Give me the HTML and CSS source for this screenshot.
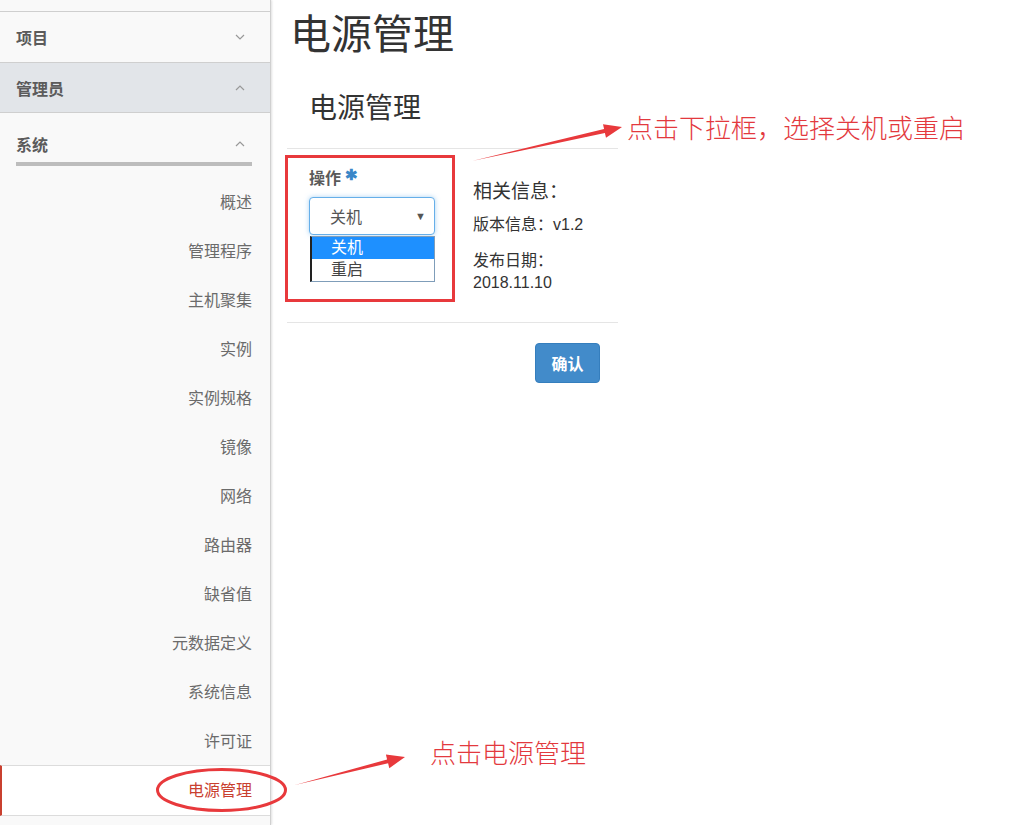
FILE: index.html
```html
<!DOCTYPE html>
<html lang="zh">
<head>
<meta charset="utf-8">
<title>电源管理</title>
<link rel="stylesheet" href="styles.css">
</head>
<body>
<div class="layout">
  <aside class="sidebar">
    <div class="top-gap"></div>
    <div class="group-head first">
      <span>项目</span>
      <svg class="chev" width="10" height="6" viewBox="0 0 10 6"><path d="M1 1 L5 5 L9 1" fill="none" stroke="#999" stroke-width="1.2"/></svg>
    </div>
    <div class="group-head open">
      <span>管理员</span>
      <svg class="chev" width="10" height="6" viewBox="0 0 10 6"><path d="M1 5 L5 1 L9 5" fill="none" stroke="#999" stroke-width="1.2"/></svg>
    </div>
    <div class="group-head system">
      <span>系统</span>
      <svg class="chev" width="10" height="6" viewBox="0 0 10 6"><path d="M1 5 L5 1 L9 5" fill="none" stroke="#999" stroke-width="1.2"/></svg>
    </div>
    <div class="system-bar"></div>
    <ul class="nav">
      <li>概述</li>
      <li>管理程序</li>
      <li>主机聚集</li>
      <li>实例</li>
      <li>实例规格</li>
      <li>镜像</li>
      <li>网络</li>
      <li>路由器</li>
      <li>缺省值</li>
      <li>元数据定义</li>
      <li>系统信息</li>
      <li>许可证</li>
      <li class="active">电源管理</li>
    </ul>
  </aside>
  <main class="content">
    <h1 class="page-title">电源管理</h1>
    <section class="panel">
      <div class="panel-head">电源管理</div>
      <div class="panel-body">
        <div class="form-col">
          <label class="field-label">操作 <span class="req">✱</span></label>
          <div class="select-wrap">
            <div class="select">
              <span>关机</span>
              <span class="caret">▼</span>
            </div>
            <ul class="dropdown">
              <li class="selected">关机</li>
              <li>重启</li>
            </ul>
          </div>
        </div>
        <div class="info-col">
          <div class="info-title">相关信息：</div>
          <p class="info-line">版本信息：v1.2</p>
          <p class="info-line">发布日期：2018.11.10</p>
        </div>
      </div>
      <div class="panel-foot">
        <button class="btn-primary">确认</button>
      </div>
    </section>
  </main>
</div>

<svg class="marks" width="1010" height="825" viewBox="0 0 1010 825">
  <rect x="286.5" y="156.5" width="167" height="144" fill="none" stroke="#e8393c" stroke-width="3"/>
  <polygon points="472,161 604.1,129.1 603,124.2 622,127 606,137.8 604.9,133" fill="#e8393c"/>
  <ellipse cx="221.5" cy="790" rx="64" ry="20.5" fill="none" stroke="#e8393c" stroke-width="3"/>
  <polygon points="295,785 387.1,759.5 385.9,754.6 405,757 389.3,768.2 388.1,763.3" fill="#e8393c"/>
</svg>
<div class="note note-top">点击下拉框，选择关机或重启</div>
<div class="note note-bottom">点击电源管理</div>
</body>
</html>
```
FILE: styles.css
```css
* { box-sizing: border-box; }
html, body {
  margin: 0;
  padding: 0;
  background: #fff;
  font-family: "Liberation Sans", "Noto Sans CJK SC", sans-serif;
  color: #333;
}
body { position: relative; width: 1010px; height: 825px; overflow: hidden; }

.layout { display: flex; height: 825px; }

.sidebar {
  width: 271px;
  flex: none;
  background: #f9f9f9;
  border-right: 1px solid #d0d0d0;
  box-shadow: 1px 0 2px rgba(0,0,0,0.12);
  display: flex;
  flex-direction: column;
}
.sidebar > * { flex: none; }
.top-gap { height: 12px; border-bottom: 1px solid #cfcfcf; }
.group-head {
  height: 50px;
  padding: 0 25px 0 16px;
  display: flex;
  align-items: center;
  justify-content: space-between;
  font-size: 16px;
  font-weight: bold;
  color: #5b5b5b;
  border-bottom: 1px solid #cfcfcf;
}
.group-head.first { height: 51px; }
.group-head.open { background: #e2e5e9; height: 50px; }
.group-head.system { border-bottom: none; height: 49px; padding-top: 12px; }
.chev { display: block; }
.system-bar {
  height: 4px;
  margin: 0 18px 0 16px;
  background: #bdbdbd;
}
.nav {
  list-style: none;
  margin: 0;
  padding: 12px 0 0 0;
}
.nav li {
  height: 49px;
  line-height: 49px;
  text-align: right;
  padding-right: 18px;
  font-size: 16px;
  color: #6b6b6b;
}
.nav li.active {
  background: #fff;
  color: #c9402f;
  border-left: 2px solid #c9402f;
  border-top: 1px solid #dcdcdc;
  border-bottom: 1px solid #dcdcdc;
  height: 51px;
  line-height: 49px;
  margin-top: -1px;
}

.content {
  flex: 1;
  padding-left: 16px;
}
.page-title {
  margin: 0;
  padding-left: 3px;
  font-size: 41px;
  font-weight: normal;
  line-height: 70px;
  color: #333;
}
.panel { width: 331px; }
.panel-head {
  height: 79px;
  line-height: 78px;
  padding-left: 22px;
  font-size: 28px;
  color: #333;
  border-bottom: 1px solid #e5e5e5;
}
.panel-body {
  display: flex;
  gap: 38px;
  padding: 20px 8px 28px 22px;
  border-bottom: 1px solid #e5e5e5;
}
.form-col { width: 126px; flex: none; }
.field-label {
  display: block;
  font-size: 16px;
  line-height: 20px;
  font-weight: bold;
  color: #5a5a5a;
  margin-bottom: 8px;
}
.req { color: #3a87c8; font-size: 15px; position: relative; top: -4px; }
.select-wrap { position: relative; }
.select {
  height: 38px;
  border: 1px solid #66afe9;
  border-radius: 4px;
  box-shadow: 0 0 5px rgba(102,175,233,0.55);
  display: flex;
  align-items: center;
  justify-content: space-between;
  padding: 0 8px 0 20px;
  font-size: 16px;
  color: #555;
  background: #fff;
}
.caret { font-size: 11px; color: #555; }
.dropdown {
  position: absolute;
  left: 1px;
  top: 39px;
  width: 125px;
  margin: 0;
  padding: 0;
  list-style: none;
  background: #fff;
  border: 1px solid #7f9db9;
  border-left: 2px solid #222;
}
.dropdown li {
  height: 22px;
  line-height: 22px;
  font-size: 16px;
  padding-left: 19px;
  color: #444;
}
.dropdown li.selected { background: #1e90ff; color: #fff; }

.info-col { padding-top: 11px; flex: 1; }
.info-title { font-size: 19px; line-height: 24px; color: #333; margin-bottom: 10px; }
.info-line { margin: 0 0 14px 0; font-size: 16px; line-height: 22px; color: #333; }
.info-line:last-child { margin-bottom: 0; }

.panel-foot {
  display: flex;
  justify-content: flex-end;
  padding: 20px 18px;
}
.btn-primary {
  width: 65px;
  height: 40px;
  border: 1px solid #357ebd;
  border-radius: 4px;
  background: #428bca;
  color: #fff;
  font-family: inherit;
  font-size: 16px;
  font-weight: bold;
}

.marks { position: absolute; left: 0; top: 0; pointer-events: none; }
.note {
  position: absolute;
  color: #e3393e;
  font-family: "Noto Sans CJK SC", sans-serif;
  font-size: 26px;
  line-height: 30px;
  font-weight: 300;
  white-space: nowrap;
}
.note-top { left: 627px; top: 112px; }
.note-bottom { left: 430px; top: 737px; }
```
